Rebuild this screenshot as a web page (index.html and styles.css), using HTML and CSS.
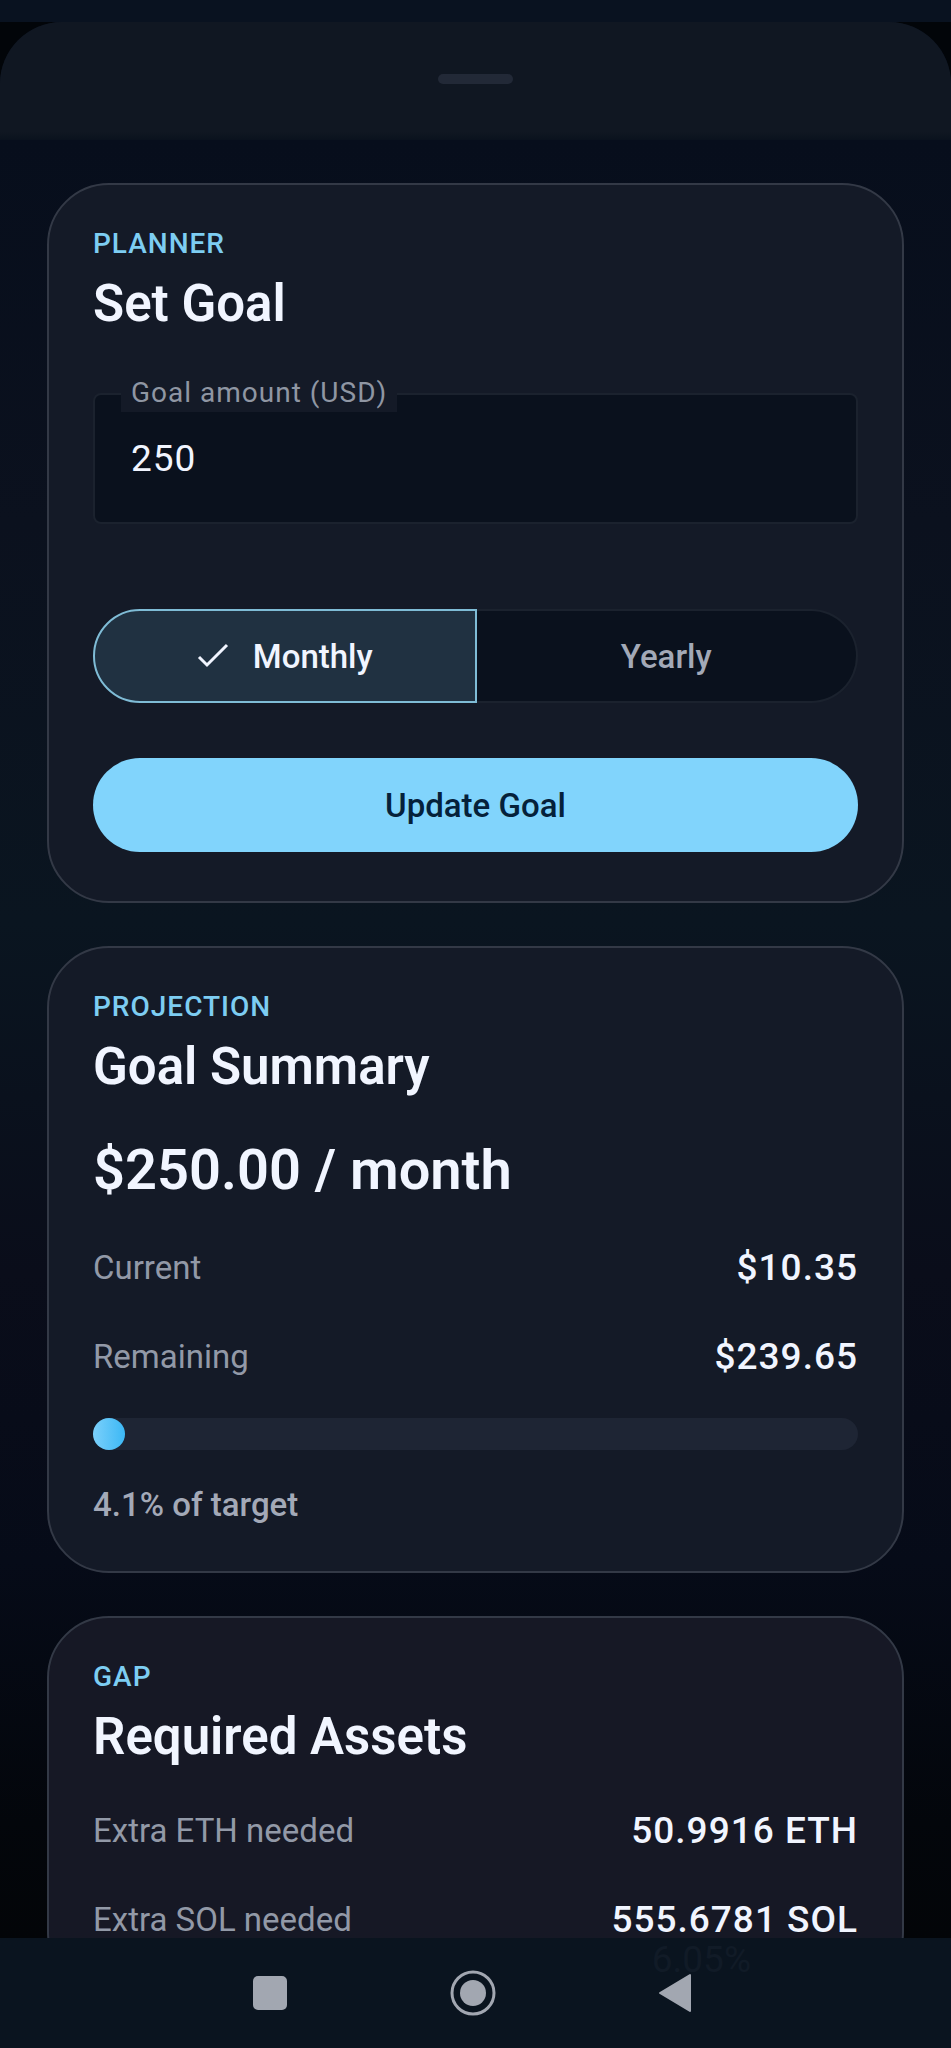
FILE: index.html
```
<!DOCTYPE html>
<html lang="en">
<head>
  <meta charset="UTF-8">
  <meta name="viewport" content="width=device-width, initial-scale=1">
  <title>Goal Planner</title>
  <link rel="stylesheet" href="styles.css">
</head>
<body>
  <div class="sheet">
    <header class="sheet-header">
      <div class="handle"></div>
    </header>

    <main class="content">
      <form class="card">
        <p class="eyebrow">PLANNER</p>
        <h2>Set Goal</h2>
        <div class="field">
          <label for="amount">Goal amount (USD)</label>
          <input type="text" id="amount" inputmode="decimal" value="250">
        </div>
        <div class="segmented">
          <button type="button" class="segment selected" aria-pressed="true">
            <svg width="32" height="26" viewBox="0 0 32 26" aria-hidden="true">
              <path d="M2 14l8 8L30 2" fill="none" stroke="currentColor" stroke-width="3"/>
            </svg>
            Monthly
          </button>
          <button type="button" class="segment" aria-pressed="false">Yearly</button>
        </div>
        <button type="button" class="update">Update Goal</button>
      </form>

      <section class="card">
        <p class="eyebrow">PROJECTION</p>
        <h2>Goal Summary</h2>
        <p class="amount">$250.00 / month</p>
        <div class="row"><span>Current</span><strong>$10.35</strong></div>
        <div class="row"><span>Remaining</span><strong>$239.65</strong></div>
        <div class="progress"><div class="progress-bar" style="width: 4.1%"></div></div>
        <p class="caption">4.1% of target</p>
      </section>

      <section class="card gap-card">
        <p class="eyebrow">GAP</p>
        <h2>Required Assets</h2>
        <div class="row"><span>Extra ETH needed</span><strong>50.9916 ETH</strong></div>
        <div class="row"><span>Extra SOL needed</span><strong>555.6781 SOL</strong></div>
      </section>
    </main>
  </div>

  <nav class="navbar">
    <span class="behind" aria-hidden="true">6.05%</span>
    <button type="button" aria-label="Recent apps">
      <svg width="46" height="46" viewBox="0 0 46 46"><rect x="6" y="6" width="34" height="34" rx="5" fill="currentColor"/></svg>
    </button>
    <button type="button" aria-label="Home">
      <svg width="46" height="46" viewBox="0 0 46 46">
        <circle cx="23" cy="23" r="21" fill="none" stroke="currentColor" stroke-width="3"/>
        <circle cx="23" cy="23" r="13" fill="currentColor"/>
      </svg>
    </button>
    <button type="button" aria-label="Back">
      <svg width="46" height="46" viewBox="0 0 46 46"><path d="M7 23L37 5v36z" fill="currentColor" stroke="currentColor" stroke-width="2" stroke-linejoin="round"/></svg>
    </button>
  </nav>
</body>
</html>
```

FILE: styles.css
```
* {
  box-sizing: border-box;
}

body {
  margin: 0;
  height: 100vh;
  display: flex;
  flex-direction: column;
  overflow: hidden;
  padding-top: 22px;
  font-family: Roboto, sans-serif;
  color: #f1f5ff;
  background: linear-gradient(#091220 22px, #020509 22px);
}

h2, p {
  margin: 0;
}

button, input {
  font-family: inherit;
}

.sheet {
  flex: 1;
  min-height: 0;
  overflow: hidden;
  border-radius: 62px 62px 0 0;
  background: linear-gradient(#070e1c 120px, #0b111e 500px, #0a1520 900px, #0a0d1a 1250px, #060b18 1540px, #03060b 1800px, #030508);
}

.sheet-header {
  display: flex;
  justify-content: center;
  padding: 52px 0 56px;
  background: linear-gradient(#101722 110px, #0a121e);
}

.handle {
  width: 75px;
  height: 10px;
  border-radius: 5px;
  background: #222937;
}

.content {
  display: flex;
  flex-direction: column;
  gap: 43px;
  padding: 43px 47px;
}

.card {
  display: flex;
  flex-direction: column;
  gap: 33px;
  padding: 44px;
  border: 2px solid #333946;
  border-radius: 62px;
  background: #141a27;
}

.gap-card {
  background: #161825;
}

.eyebrow {
  margin-bottom: -21px;
  font-size: 28px;
  font-weight: 500;
  line-height: 30px;
  letter-spacing: 1px;
  color: #7dcdf2;
}

h2 {
  font-size: 51px;
  font-weight: 600;
  line-height: 66px;
}

.field {
  position: relative;
  padding-top: 23px;
  margin-bottom: 52px;
}

/* floating label sits on the top border of the input */
.field label {
  position: absolute;
  top: 4px;
  left: 28px;
  padding: 0 10px;
  font-size: 28px;
  line-height: 38px;
  letter-spacing: 1px;
  color: #8f96a3;
  background: #141a27;
}

.field input {
  display: block;
  width: 100%;
  height: 131px;
  padding: 0 36px;
  border: 2px solid #1b222e;
  border-radius: 8px;
  font-size: 37px;
  letter-spacing: 1px;
  color: #f1f5ff;
  background: #0a111d;
}

.segmented {
  display: flex;
}

.segment {
  flex: 1;
  display: flex;
  justify-content: center;
  align-items: center;
  gap: 24px;
  height: 94px;
  border: 2px solid #1b222e;
  border-left: none;
  border-radius: 0 47px 47px 0;
  font-size: 33px;
  font-weight: 500;
  color: #a3a9b7;
  background: #0a111d;
}

.segment.selected {
  border: 2px solid #7fbcd6;
  border-radius: 47px 0 0 47px;
  color: #f1f5ff;
  background: #203141;
}

.update {
  height: 94px;
  margin: 22px 0 5px;
  border: none;
  border-radius: 47px;
  font-size: 33px;
  font-weight: 500;
  color: #05213a;
  background: #81d4fc;
}

.amount {
  font-size: 56px;
  font-weight: 600;
  line-height: 74px;
}

.row {
  display: flex;
  justify-content: space-between;
  align-items: center;
  line-height: 56px;
}

.row span {
  font-size: 33px;
  color: #9299a7;
}

.row strong {
  font-size: 37px;
  font-weight: 500;
  letter-spacing: 1px;
}

.progress {
  height: 32px;
  border-radius: 16px;
  background: #1e2534;
}

.progress-bar {
  min-width: 32px;
  height: 32px;
  border-radius: 16px;
  background: linear-gradient(to right, #7bd0fb, #3cb8f5);
}

.caption {
  font-size: 33px;
  font-weight: 500;
  line-height: 44px;
  color: #a3a9b7;
}

.navbar {
  position: relative;
  display: flex;
  justify-content: center;
  align-items: center;
  gap: 157px;
  height: 110px;
  padding-right: 6px;
  background: #0a141f;
}

.navbar button {
  display: flex;
  padding: 0;
  border: none;
  color: #a2a7b1;
  background: none;
}

/* screen content faintly visible through the bar */
.behind {
  position: absolute;
  top: 4px;
  right: 200px;
  font-size: 37px;
  line-height: 36px;
  color: #111b27;
}
```
